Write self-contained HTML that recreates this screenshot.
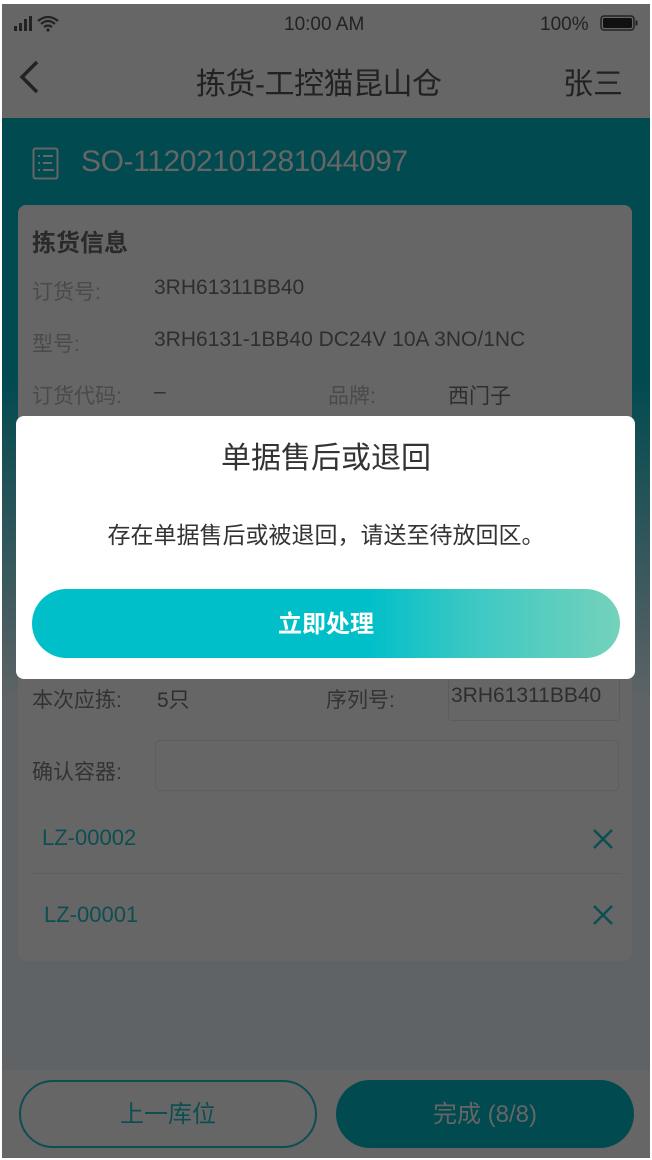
<!DOCTYPE html>
<html><head><meta charset="utf-8"><style>
*{margin:0;padding:0;box-sizing:border-box}
body{width:652px;height:1160px;overflow:hidden;background:#fff;font-family:"Liberation Sans","Noto Sans CJK SC",sans-serif;}
#s{position:absolute;left:2px;top:4px;width:648px;height:1154px;background:linear-gradient(#666 0,#666 114px,#004a50 114px,#004a50 370px,#5f6366 700px,#5f6366 100%);overflow:hidden}
.a{position:absolute;white-space:nowrap}
.card{position:absolute;left:16px;top:201px;width:614px;height:756px;background:#666;border-radius:8px}
.lbl{color:#4a4a4a;font-size:21px}
.val{color:#2e2e2e;font-size:21px}
.dlg{position:absolute;left:16px;top:416px;width:619px;height:263px;background:#fff;border-radius:8px}
</style></head><body>
<div id="s">
<svg class="a" style="left:12px;top:10px" width="60" height="20"><rect x="0" y="12" width="3" height="5" fill="#222"/><rect x="5" y="9" width="3" height="8" fill="#222"/><rect x="10" y="5" width="3" height="12" fill="#222"/><rect x="15" y="2" width="3" height="15" fill="#222"/><path d="M24 7 Q34 -1 44 7 M27 10 Q34 4 41 10 M30 13 Q34 10 38 13" stroke="#222" stroke-width="2.2" fill="none"/><circle cx="34" cy="16" r="1.6" fill="#222"/></svg>
<div class="a" style="left:282px;top:10px;font-size:19px;color:#222">10:00 AM</div>
<div class="a" style="left:538px;top:10px;font-size:19px;color:#222">100%</div>
<svg class="a" style="left:598px;top:10px" width="40" height="18"><rect x="1" y="2" width="33" height="14" rx="3" stroke="#222" stroke-width="1.5" fill="none"/><rect x="3" y="4" width="29" height="10" rx="1.5" fill="#111"/><rect x="35.5" y="6.5" width="2" height="5" fill="#222"/></svg>
<svg class="a" style="left:16px;top:56px" width="22" height="34"><path d="M19 2 L4 17 L19 32" stroke="#222" stroke-width="3.5" fill="none"/></svg>
<div class="a" style="left:194px;top:55px;font-size:30px;color:#222;letter-spacing:-0.5px">拣货-工控猫昆山仓</div>
<div class="a" style="left:561px;top:55px;font-size:30px;color:#222">张三</div>
<svg class="a" style="left:30px;top:143px" width="30" height="34"><rect x="1.5" y="1.5" width="24" height="30" rx="2" stroke="#666" stroke-width="2" fill="none"/><g fill="#666"><rect x="6" y="8" width="2" height="2"/><rect x="6" y="15" width="2" height="2"/><rect x="6" y="22" width="2" height="2"/><rect x="11" y="8" width="10" height="2"/><rect x="11" y="15" width="9" height="2"/><rect x="11" y="22" width="11" height="2"/></g></svg>
<div class="a" style="left:79px;top:141px;font-size:30px;color:#666;letter-spacing:-0.4px">SO-11202101281044097</div>
<div class="card"></div>
<div class="a" style="left:30px;top:219px;font-size:24px;font-weight:bold;color:#2a2a2a">拣货信息</div>
<div class="a lbl" style="left:30px;top:272px">订货号:</div><div class="a val" style="left:152px;top:272px">3RH61311BB40</div>
<div class="a lbl" style="left:30px;top:324px">型号:</div><div class="a val" style="left:152px;top:324px">3RH6131-1BB40 DC24V 10A 3NO/1NC</div>
<div class="a lbl" style="left:30px;top:376px">订货代码:</div><div class="a val" style="left:152px;top:376px">–</div>
<div class="a lbl" style="left:326px;top:376px">品牌:</div><div class="a val" style="left:446px;top:376px">西门子</div>
<div class="a val" style="left:30px;top:680px;color:#333">本次应拣:</div><div class="a val" style="left:155px;top:680px">5只</div>
<div class="a val" style="left:324px;top:680px;color:#333">序列号:</div>
<div class="a" style="left:446px;top:676px;width:172px;height:41px;border:1.5px solid #5c5c5c;border-top:none;border-radius:0 0 4px 4px"></div>
<div class="a val" style="left:449px;top:680px">3RH61311BB40</div>
<div class="a val" style="left:30px;top:752px;color:#333">确认容器:</div>
<div class="a" style="left:153px;top:736px;width:464px;height:51px;border:1.5px solid #5c5c6a;border-radius:5px"></div>
<div class="a" style="left:40px;top:821px;font-size:22px;color:#0d4e53">LZ-00002</div>
<svg class="a" style="left:590px;top:824px" width="22" height="22"><path d="M2 2L20 20M20 2L2 20" stroke="#0d4e53" stroke-width="2.5"/></svg>
<div class="a" style="left:30px;top:869px;width:590px;height:1px;background:#5e5e5e"></div>
<div class="a" style="left:42px;top:898px;font-size:22px;color:#0d4e53">LZ-00001</div>
<svg class="a" style="left:590px;top:900px" width="22" height="22"><path d="M2 2L20 20M20 2L2 20" stroke="#0d4e53" stroke-width="2.5"/></svg>
<div class="a" style="left:0;top:1066px;width:648px;height:90px;background:#666"></div>
<div class="a" style="left:17px;top:1076px;width:298px;height:68px;border:2px solid #0d4e53;border-radius:34px;text-align:center;line-height:66px;font-size:24px;color:#0d4e53">上一库位</div>
<div class="a" style="left:334px;top:1076px;width:298px;height:68px;background:#004a50;border-radius:34px;text-align:center;line-height:70px;font-size:24px;color:#666">完成 (8/8)</div>
</div>
<div class="dlg"></div>
<div class="a" style="left:0;top:433px;width:652px;text-align:center;font-size:30px;color:#333">单据售后或退回</div>
<div class="a" style="left:0;top:516px;width:652px;text-align:center;font-size:23px;color:#333">存在单据售后或被退回，请送至待放回区。</div>
<div class="a" style="left:32px;top:589px;width:588px;height:69px;border-radius:35px;background:linear-gradient(90deg,#00bfc9 0%,#00bfc9 57%,#3dc8c4 75%,#74d2bb 100%);text-align:center;line-height:72px;font-size:24px;font-weight:bold;color:#fff">立即处理</div>
</body></html>
